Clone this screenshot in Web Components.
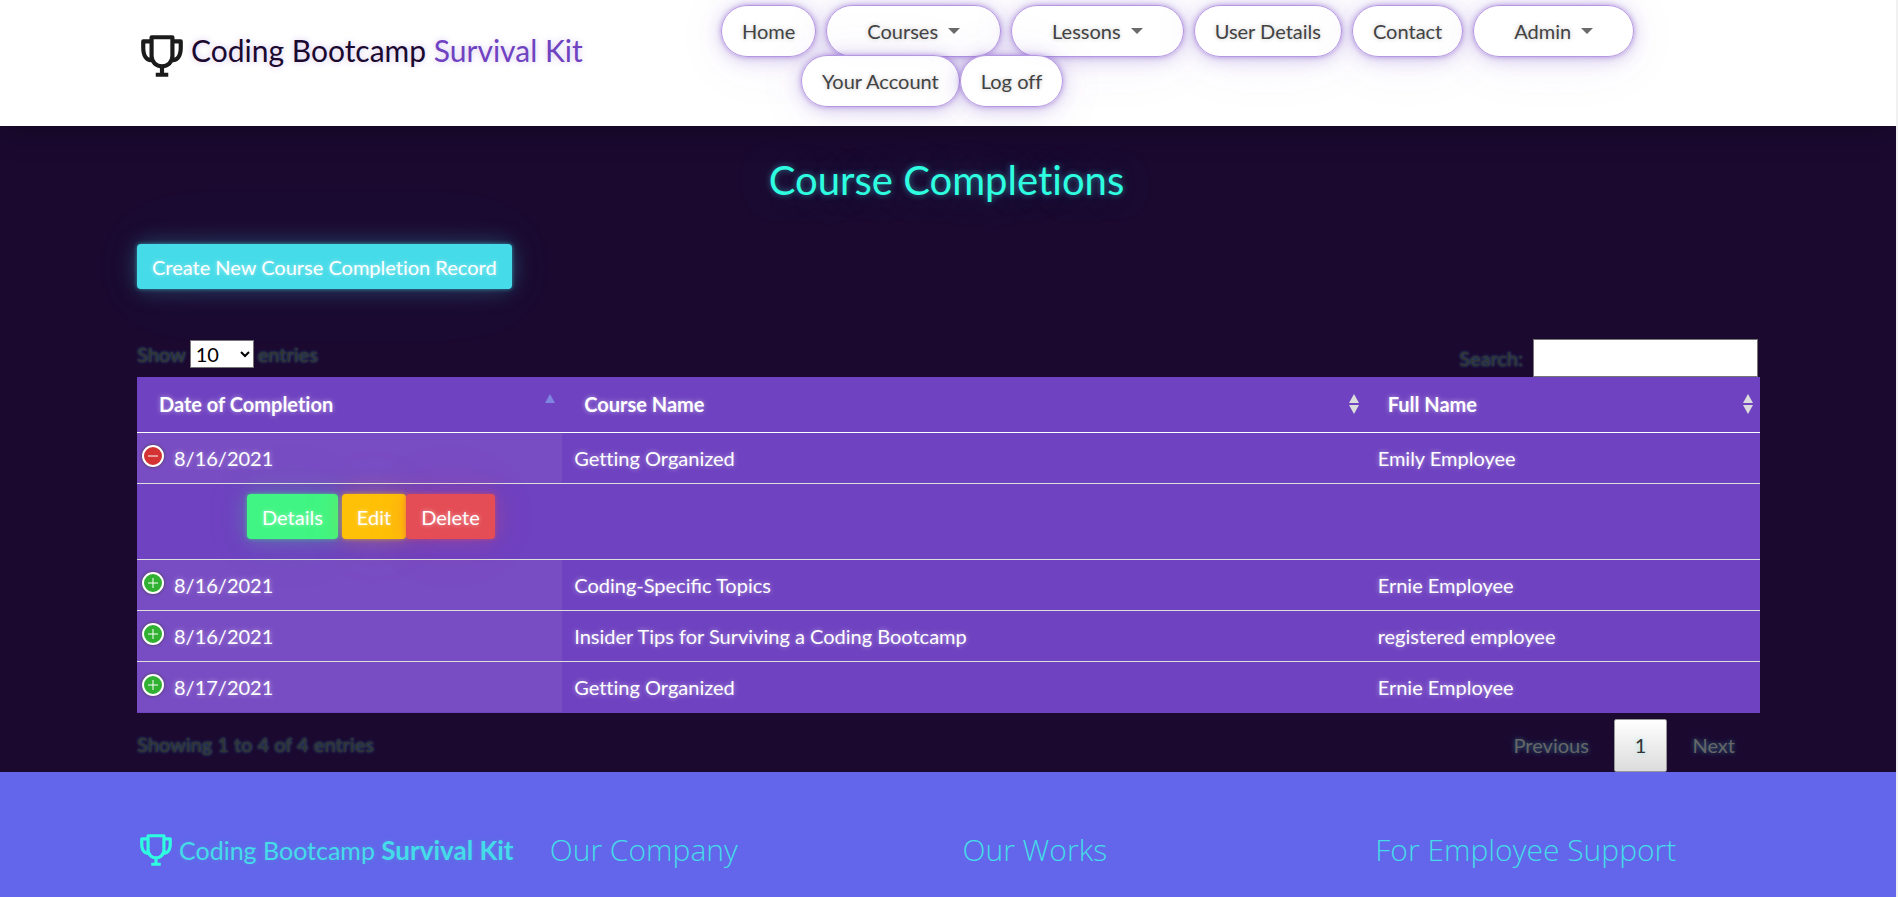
<!DOCTYPE html>
<html lang="en">
<head>
<meta charset="utf-8">
<title>Course Completions</title>
<style>
:root{--purple:#6f42c1;--dark:#1b0930;--cyan:#45dbe8;--aqua:#2effe0;--edge:137px}
body{margin:0;border-right:2px solid #f1f1f1;background:var(--dark);font:400 20px/30px Lato,sans-serif;font-variant-ligatures:none;color:#fff}
</style>
</head>
<body>
<site-header></site-header>
<completions-page></completions-page>
<site-footer></site-footer>
<script>
const define=(name,html)=>customElements.define(name,class extends HTMLElement{
  constructor(){super();this.attachShadow({mode:'open'}).innerHTML=html;}
});

define('trophy-icon',`<style>:host{display:block;width:50px;height:50px;flex:none}svg{display:block;width:100%;height:100%}</style>
<svg viewBox="0 0 24 24" fill="currentColor" aria-hidden="true"><path d="M21 4h-3V3a1 1 0 0 0-1-1H7a1 1 0 0 0-1 1v1H3a1 1 0 0 0-1 1v3c0 4.31 1.8 6.91 4.82 7A6 6 0 0 0 11 17.91V20H9v2h6v-2h-2v-2.09A6 6 0 0 0 17.18 15c3-.1 4.82-2.7 4.82-7V5a1 1 0 0 0-1-1zM4 8V6h2v6.83C4.22 12.08 4 9.3 4 8zm14 4.83V6h2v2c0 1.3-.22 4.08-2 4.83zM8 12V4h8v8a4 4 0 0 1-8 0z"/></svg>`);

define('nav-pill',`<style>
:host{display:block}
a{display:flex;align-items:center;box-sizing:border-box;height:52px;padding:0 20px;border:1px solid #b697e3;border-radius:26px;background:#fffffff0;color:#424242;text-decoration:none;white-space:nowrap;
 text-shadow:0 0 4px #4242424d;box-shadow:0 0 5px #6f42c173,0 2px 18px #6f42c14d,0 4px 60px #6f42c112}
:host([menu]) a{padding:0 40px}
:host([menu]) a::after{content:"";margin:0 0 0 10px;border:6px solid transparent;border-top-color:#6b6b6b;border-bottom:0}
</style><a href="#"><slot></slot></a>`);

define('site-header',`<style>
:host{display:block;position:relative;background:#fff;box-shadow:0 0 30px #0006;color:#1b0930}
header{display:flex;box-sizing:border-box;height:126px;padding:5px var(--edge) 0;overflow:hidden}
.brand{display:flex;align-items:center;height:102px;width:584px;flex:none;font-size:30px;line-height:40px;color:#1b0930;text-decoration:none;gap:4px;text-shadow:0 0 6px #6f42c14d}
.brand span{padding-bottom:12px}
trophy-icon{color:#1b1b1b}
b{font-weight:400;color:var(--purple)}
.row{display:flex;gap:10px}
.row+.row{gap:0;margin:-2px 0 0 80px}
</style>
<header><a class="brand" href="#"><trophy-icon></trophy-icon><span>Coding Bootcamp <b>Survival Kit</b></span></a>
<nav><div class="row"><nav-pill>Home</nav-pill><nav-pill menu>Courses</nav-pill><nav-pill menu>Lessons</nav-pill><nav-pill>User Details</nav-pill><nav-pill>Contact</nav-pill><nav-pill menu>Admin</nav-pill></div>
<div class="row"><nav-pill>Your Account</nav-pill><nav-pill>Log off</nav-pill></div></nav></header>`);

define('glow-button',`<style>
:host{display:block;--c:#45dbe8}
:host([tone=green]){--c:#40f583}:host([tone=amber]){--c:#ffc107}:host([tone=red]){--c:#e44d56}
button{display:block;height:45px;border:0;border-radius:4px;padding:1px 15px 0;background:var(--c);color:#fff;font:inherit;font-variant-ligatures:none;text-shadow:0 0 4px #ffffff8c;white-space:nowrap;
 box-shadow:0 0 4px color-mix(in srgb,var(--c) 60%,transparent),0 0 24px color-mix(in srgb,var(--c) 30%,transparent),0 0 80px color-mix(in srgb,var(--c) 5%,transparent)}
</style><button type="button"><slot></slot></button>`);

define('row-toggle',`<style>
:host{display:block;flex:none}
button{display:block;box-sizing:border-box;width:22px;height:22px;padding:0;border:2px solid #fff;border-radius:50%;background:#31b131;box-shadow:0 0 3px #444}
:host([open]) button{background:#d33333}
svg{display:block;width:18px;height:18px;stroke:#fff;fill:none}
:host([open]) .v{display:none}
</style><button type="button" aria-label="Toggle row details"><svg viewBox="0 0 18 18"><path d="M4 9h10"/><path class="v" d="M9 4v10"/></svg></button>`);

define('sort-mark',`<style>:host{display:block;width:10px;flex:none;color:#dcdcdc}svg{display:block;width:10px;height:20px}
:host([asc]){color:#7e86e0}:host([asc]) .d{display:none}</style>
<svg viewBox="0 0 10 20" fill="currentColor"><path d="M5 0l5 9H0z"/><path class="d" d="M5 20l5-9H0z"/></svg>`);

define('completion-table',`<style>
:host{display:block}
table{width:100%;table-layout:fixed;border-collapse:separate;border-spacing:0;border-bottom:1px solid var(--purple);background:var(--purple);text-shadow:0 0 5px #ffffff80}
th,td{padding:0;text-align:left}
th{height:55px;border-bottom:1px solid #fff;font-weight:700}
th div{display:flex;align-items:center;justify-content:space-between;padding:0 7px 1px 22px}
td{box-sizing:border-box;height:51px;padding:0 12px;border-top:1px solid #ddd}
tbody tr:first-child td{height:50px;border-top:0}
td.date{padding:0 5px;background:#784cc3}
.date div{display:flex;gap:10px}
.date row-toggle{margin-top:2px}
td.actions{height:76px;padding:0 110px}
.actions div{display:flex;margin-bottom:11px}
.actions glow-button:first-child{margin-right:4px}
.lig{font-variant-ligatures:normal}
.c1{width:26.2%}.c3{width:24.3%}
</style>
<table><colgroup><col class="c1"><col><col class="c3"></colgroup>
<thead><tr><th><div>Date of Completion<sort-mark asc></sort-mark></div></th><th><div>Course Name<sort-mark></sort-mark></div></th><th><div>Full Name<sort-mark></sort-mark></div></th></tr></thead>
<tbody>
<tr><td class="date"><div><row-toggle open></row-toggle>8/16/2021</div></td><td>Getting Organized</td><td>Emily Employee</td></tr>
<tr><td class="actions" colspan="3"><div><glow-button tone="green">Details</glow-button><glow-button tone="amber">Edit</glow-button><glow-button tone="red">Delete</glow-button></div></td></tr>
<tr><td class="date"><div><row-toggle></row-toggle>8/16/2021</div></td><td class="lig">Coding-Specific Topics</td><td>Ernie Employee</td></tr>
<tr><td class="date"><div><row-toggle></row-toggle>8/16/2021</div></td><td>Insider Tips for Surviving a Coding Bootcamp</td><td>registered employee</td></tr>
<tr><td class="date"><div><row-toggle></row-toggle>8/17/2021</div></td><td>Getting Organized</td><td>Ernie Employee</td></tr>
</tbody></table>`);

define('page-links',`<style>
:host{display:flex;text-shadow:0 0 5px #45dbe873}
a{display:block;box-sizing:border-box;padding:10px 24px;height:53px;border:1px solid transparent;color:#666;text-decoration:none}
a.on{padding:10px 20px;border-color:#979797;border-radius:2px;background:linear-gradient(#fff,#dcdcdc);color:#333}
</style><a href="#">Previous</a><a class="on" href="#" aria-current="page">1</a><a href="#">Next</a>`);

define('completions-page',`<style>
:host{display:block;padding:0 136px 0 var(--edge)}
h1{margin:0;padding:30px 4px 40px 0;text-align:center;font-weight:400;font-size:40px;line-height:48px;color:var(--aqua);text-shadow:0 0 6px #45dbe880,0 0 40px #45dbe840}
.new{display:flex}
.tools,.foot{display:flex;justify-content:space-between;color:#333;text-shadow:0 0 3px #45dbe880}
.tools{align-items:end;padding-top:50px}
label{display:flex;align-items:center}
.len{gap:4px;margin-bottom:8px}
select{box-sizing:border-box;width:64px;height:28px;padding:0 1px;border:1px solid #767676;border-radius:0;background:#fff;color:#000;font:inherit;line-height:26px}
.find{gap:10px;margin-right:2px}
input{box-sizing:border-box;width:225px;height:38px;border:1px solid #767676;background:#fff;font:inherit;padding:1px 5px}
.foot{padding-top:6px}
.foot p{margin:10px 0 0}
</style>
<main><h1>Course Completions</h1>
<div class="new"><glow-button>Create New Course Completion Record</glow-button></div>
<div class="tools"><label class="len">Show <select><option>10</option><option>25</option><option>50</option></select> entries</label>
<label class="find">Search: <input type="search"></label></div>
<completion-table></completion-table>
<div class="foot"><p>Showing 1 to 4 of 4 entries</p><page-links></page-links></div></main>`);

define('site-footer',`<style>
:host{display:block;background:#6366ea;color:var(--cyan)}
footer{display:grid;grid-template-columns:repeat(4,1fr);gap:30px;padding:58px 138px 27px var(--edge)}
a{display:flex;align-items:center;gap:4px;color:inherit;text-decoration:none;font-size:25px;line-height:40px;white-space:nowrap;text-shadow:0 0 5px #45dbe840}
trophy-icon{width:38px;height:38px;color:var(--aqua)}
b{font-size:26px;font-weight:700}
h2{margin:0;font:300 30px/40px "Open Sans",sans-serif}
</style>
<footer><a href="#"><trophy-icon></trophy-icon><span>Coding Bootcamp <b>Survival Kit</b></span></a><h2>Our Company</h2><h2>Our Works</h2><h2>For Employee Support</h2></footer>`);
</script>
</body>
</html>
